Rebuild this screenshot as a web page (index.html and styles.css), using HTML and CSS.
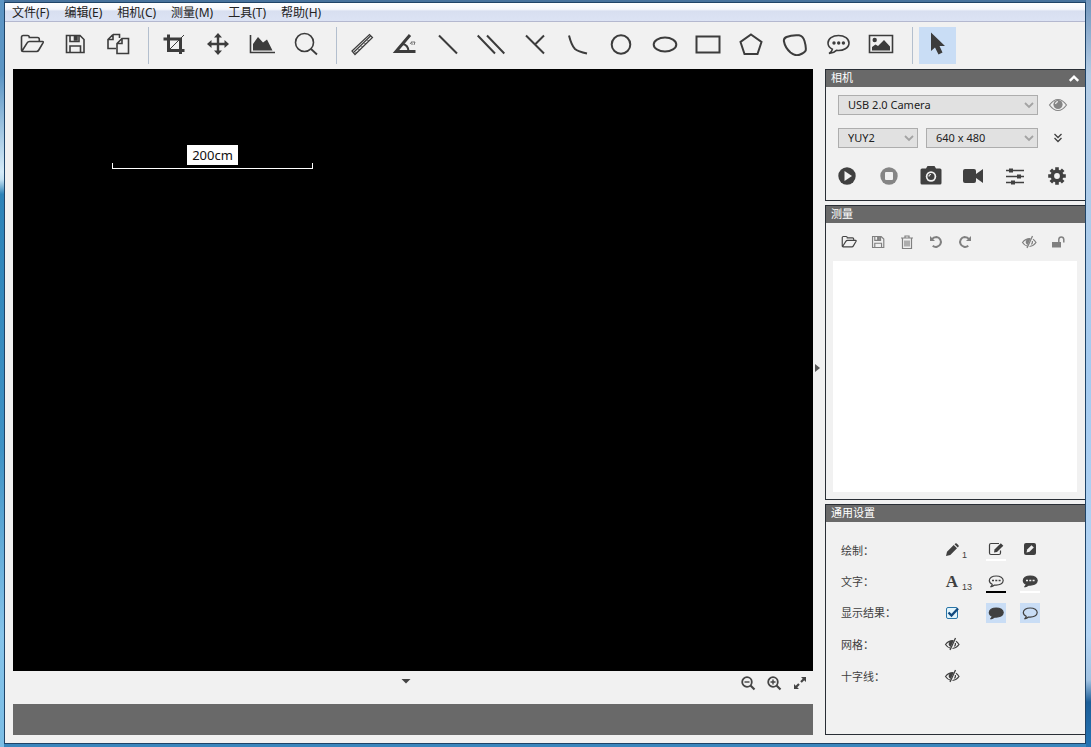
FILE: index.html
```html
<!DOCTYPE html>
<html lang="zh-CN">
<head>
<meta charset="utf-8">
<title>相机测量</title>
<link rel="stylesheet" href="styles.css">
</head>
<body>
<svg class="sprite" aria-hidden="true">
  <symbol id="folder" viewBox="0 0 28 24"><path d="M3.500 18V5.200Q3.500 3.500 5.200 3.500H9.500Q11.300 3.500 11.300 5.500H19.500Q21.300 5.500 21.300 7.300V9.300M4 19L9.300 10.700Q10 9.500 11.500 9.500H24.500Q25.700 9.500 25 10.800L20.800 18Q20 19.500 18.500 19.500H5Q3.500 19.500 3.500 18"/></symbol>
  <symbol id="save" viewBox="0 0 28 24"><path d="M5.500 3.500H19L23 7.500V20.500H5.500ZM9 20V14H19.500V20M9 4V9.500H18V4"/><path d="M13.500 4H16V8H13.500Z" fill="currentColor"/></symbol>
  <symbol id="copy" viewBox="0 0 28 24"><path d="M9 2.500H15.500V6M9 2.500L4 7.500V16.500H12M9 2.500V7.500H4M18 6.500H24.500V21.500H13V11.500ZM18 6.500V11.500H13"/></symbol>
  <symbol id="undo" viewBox="0 0 16 16"><path d="M3.500 5.500Q5.500 3 8.500 3A5 5 0 1 1 4.700 11.800" stroke-width="2"/><path d="M2 2V7H7Z" fill="currentColor" stroke="none"/></symbol>
  <symbol id="eye-slash" viewBox="0 0 16 16"><path d="M6.500 12.200Q3.500 11.500 1.500 8.500Q4.500 4.500 9.500 4.700M12 5.300Q13.700 6.500 15 8.500Q12.500 12 8.500 12.500"/><path d="M11.500 2L6 14" stroke-width="1.300"/><path d="M9.500 5A3.300 3.300 0 0 0 6.700 11Z" fill="currentColor" stroke="none"/><path d="M10.500 10.500Q11.800 9 11.400 7"/></symbol>
  <symbol id="bubble" viewBox="0 0 16 16"><path d="M8.200 3C4.200 3 1.300 5 1.300 7.600C1.300 9.200 2.500 10.500 4.200 11.300Q4 12.800 2.500 13.800Q5 13.500 6.500 12C12 12.500 15.200 10.400 15.200 7.600C15.200 5 12.200 3 8.200 3Z"/></symbol>
  <symbol id="chevron" viewBox="0 0 10 10"><path d="M1 3L5 7L9 3" stroke-width="1.800"/></symbol>
</svg>

<div class="window">
  <nav class="menubar" aria-label="菜单">
    <button>文件(F)</button><button>编辑(E)</button><button>相机(C)</button><button>测量(M)</button><button>工具(T)</button><button>帮助(H)</button>
  </nav>

  <div class="toolbar" role="toolbar" aria-label="工具栏">
    <div class="group files">
      <button class="tool" aria-label="打开"><svg class="icon"><use href="#folder"/></svg></button>
      <button class="tool" aria-label="保存"><svg class="icon"><use href="#save"/></svg></button>
      <button class="tool" aria-label="复制"><svg class="icon"><use href="#copy"/></svg></button>
    </div>
    <div class="group">
      <button class="tool" aria-label="裁剪"><svg class="icon" viewBox="0 0 28 24"><path d="M3.500 7H20.500V22M8.500 2.500V18.500H24.500" stroke-width="3"/><path d="M8 19L24 3" stroke-width="1"/></svg></button>
      <button class="tool" aria-label="移动"><svg class="icon" viewBox="0 0 28 24"><path d="M14 3V21M5 12H23" stroke-width="2.400"/><path d="M14 1L18 5.500H10ZM14 23L18 18.500H10ZM3 12L7.500 8V16ZM25 12L20.500 8V16Z" fill="currentColor" stroke="none"/></svg></button>
      <button class="tool" aria-label="直方图"><svg class="icon" viewBox="0 0 28 24"><path d="M2.500 3V20.500H27"/><path d="M5 18.500V12L10 5L15 10.500L19 7.500L24.500 18.500Z" fill="currentColor" stroke="none"/></svg></button>
      <button class="tool" aria-label="缩放"><svg class="icon" viewBox="0 0 28 24"><circle cx="12.500" cy="10.500" r="9"/><path d="M19 17L25 22.500" stroke-width="1.800"/></svg></button>
    </div>
    <div class="group shapes">
      <button class="tool" aria-label="标尺"><svg class="icon" viewBox="0 0 28 24"><path d="M4 19L21.500 2.500L24.500 5.500L7 22.500ZM6 20L22.500 4" stroke-width="1.200"/><path d="M8.500 21L7.500 20M11.500 18L10.500 17M14.500 15L13.500 14M17.500 12L16.500 11M20.500 9L19.500 8" stroke-width="1"/></svg></button>
      <button class="tool" aria-label="角度"><svg class="icon" viewBox="0 0 28 24"><path d="M19 3L5 19.500H24.500" stroke-width="3"/><path d="M12 12Q17 13 17.500 19" stroke-width="2"/><path d="M19 12L21 9.500V13M22 10H24L23 13" stroke-width=".7"/></svg></button>
      <button class="tool" aria-label="直线"><svg class="icon bold" viewBox="0 0 28 24"><path d="M5 3.500L23 21.500"/></svg></button>
      <button class="tool" aria-label="平行线"><svg class="icon bold" viewBox="0 0 28 24"><path d="M.7 3.500L18 21.500M10 3.500L27.300 21.500"/></svg></button>
      <button class="tool" aria-label="垂线"><svg class="icon bold" viewBox="0 0 28 24"><path d="M5 3.500L23 21.500M14 12.500L23 3.500"/></svg></button>
      <button class="tool" aria-label="弧线"><svg class="icon bold" viewBox="0 0 28 24"><path d="M5 3.500Q7.500 13.500 11 17Q14 19.500 23 21.500"/></svg></button>
      <button class="tool" aria-label="圆"><svg class="icon bold" viewBox="0 0 28 24"><circle cx="14" cy="12.500" r="9.300"/></svg></button>
      <button class="tool" aria-label="椭圆"><svg class="icon bold" viewBox="0 0 28 24"><ellipse cx="14" cy="12.500" rx="11.300" ry="7"/></svg></button>
      <button class="tool" aria-label="矩形"><svg class="icon bold" viewBox="0 0 28 24"><path d="M2.500 4.500H25.500V20.500H2.500Z"/></svg></button>
      <button class="tool" aria-label="多边形"><svg class="icon bold" viewBox="0 0 28 24"><path d="M14 2.500L24.500 10L20.500 22H7.500L3.500 10Z"/></svg></button>
      <button class="tool" aria-label="曲线"><svg class="icon bold" viewBox="0 0 28 24"><path d="M3 9.500Q2.300 6.500 5.500 5Q11 2.700 18 3.300Q22 4 23.500 9Q25.300 15 24.700 18.500Q23.500 21 18.500 22.700Q14 24.300 9.500 20.500Q4 15.500 3 9.500Z"/></svg></button>
      <button class="tool" aria-label="注释"><svg class="icon" viewBox="0 0 28 24"><path d="M14.500 3.500C8.500 3.500 4 6.700 4 11C4 13.800 5.700 15.900 8.400 17.200Q8 20 5 21.500Q10 21 12.500 18.400C19.500 19 25 15.800 25 11C25 6.700 20.500 3.500 14.500 3.500Z"/><g fill="currentColor" stroke="none"><circle cx="10" cy="11" r="1.700"/><circle cx="14.700" cy="11" r="1.700"/><circle cx="19.400" cy="11" r="1.700"/></g></svg></button>
      <button class="tool" aria-label="图片"><svg class="icon" viewBox="0 0 28 24"><path d="M2.500 3.500H25.500V20.500H2.500Z"/><g fill="currentColor" stroke="none"><circle cx="7.700" cy="8" r="2.200"/><path d="M5 18.500V15L8.500 12.500L11 14L17 8L23 14.500V18.500Z"/></g></svg></button>
    </div>
    <div class="group">
      <button class="tool active" aria-label="选择" aria-pressed="true"><svg class="icon" viewBox="0 0 28 24"><path d="M7 .5V19L11 15.500L14.500 22.500L18.500 20.500L15.500 14H21Z" fill="currentColor" stroke="none"/></svg></button>
    </div>
  </div>

  <div class="workspace">
    <main class="stage">
      <div class="canvas">
        <div class="scale"><span class="scale-label">200cm</span><span class="scale-line"></span></div>
      </div>
      <div class="stage-bar">
        <button class="mini fold" aria-label="折叠"><svg viewBox="0 0 10 6"><path d="M.5 1H9.500L5 5.500Z" fill="currentColor" stroke="none"/></svg></button>
        <div class="zoomers">
          <button class="mini" aria-label="缩小"><svg viewBox="0 0 16 16"><circle cx="7" cy="7" r="4.800" stroke-width="1.800"/><path d="M10.500 10.500L14.500 14.500" stroke-width="2.200"/><path d="M4.500 7H9.500" stroke-width="1.400"/></svg></button>
          <button class="mini" aria-label="放大"><svg viewBox="0 0 16 16"><circle cx="7" cy="7" r="4.800" stroke-width="1.800"/><path d="M10.500 10.500L14.500 14.500" stroke-width="2.200"/><path d="M4.500 7H9.500M7 4.500V9.500" stroke-width="1.400"/></svg></button>
          <button class="mini" aria-label="适应窗口"><svg viewBox="0 0 16 16"><path d="M3.500 12.500L7 9M9 7L12.500 3.500" stroke-width="2.200"/><path d="M9 2H14V7ZM2 9V14H7Z" fill="currentColor" stroke="none"/></svg></button>
        </div>
      </div>
      <div class="status"></div>
    </main>

    <div class="splitter"><button aria-label="收起面板"><svg viewBox="0 0 6 10"><path d="M1 1L6 5L1 9Z" fill="currentColor"/></svg></button></div>

    <aside class="side">
      <section class="panel">
        <header><h2>相机</h2><button aria-label="收起"><svg viewBox="0 0 10 10"><path d="M1.500 6.500L5 3L8.500 6.500" stroke-width="2"/></svg></button></header>
        <div class="camera">
          <div class="row">
            <label class="select"><select aria-label="相机"><option>USB 2.0 Camera</option></select><svg><use href="#chevron"/></svg></label>
            <button class="side-icon dim" aria-label="预览"><svg class="eye" viewBox="0 0 20 16"><path d="M1.500 8Q5.500 2.500 10 2.500T18.500 8Q14.500 13.500 10 13.500T1.500 8Z"/><circle cx="10" cy="7.500" r="4.600" fill="currentColor" stroke="none"/><path d="M7.500 7Q8 4.700 10 4.700" stroke="#f1f1f1"/></svg></button>
          </div>
          <div class="row">
            <label class="select format"><select aria-label="格式"><option>YUY2</option></select><svg><use href="#chevron"/></svg></label>
            <label class="select"><select aria-label="分辨率"><option>640 x 480</option></select><svg><use href="#chevron"/></svg></label>
            <button class="side-icon" aria-label="更多"><svg viewBox="0 0 16 16"><path d="M4.500 4L8 7.500L11.500 4M4.500 8L8 11.500L11.500 8" stroke-width="1.300"/></svg></button>
          </div>
          <div class="actions">
            <button aria-label="播放"><svg viewBox="0 0 24 24"><circle cx="12" cy="12" r="8.700" fill="currentColor" stroke="none"/><path d="M9.500 7L17 12L9.500 17Z" fill="#f1f1f1" stroke="none"/></svg></button>
            <button class="dim" aria-label="停止"><svg viewBox="0 0 24 24"><circle cx="12" cy="12" r="8.700" fill="currentColor" stroke="none"/><rect x="8" y="8" width="8" height="8" rx="1" fill="#f1f1f1" stroke="none"/></svg></button>
            <button aria-label="拍照"><svg viewBox="0 0 24 24"><path d="M3 4.500H7L8.500 2H15.500L17 4.500H21Q22.500 4.500 22.500 6V19Q22.500 20.500 21 20.500H3Q1.500 20.500 1.500 19V6Q1.500 4.500 3 4.500Z" fill="currentColor" stroke="none"/><circle cx="12" cy="12.500" r="5.200" fill="#f1f1f1" stroke="none"/><circle cx="12" cy="12.500" r="3.500" fill="currentColor" stroke="none"/><path d="M10 12.500Q10 10.500 12 10.500" stroke="#f1f1f1"/></svg></button>
            <button aria-label="录像"><svg viewBox="0 0 24 24"><path d="M4 5H13Q15 5 15 7V10L22 5V19L15 14V17Q15 19 13 19H4Q2 19 2 17V7Q2 5 4 5Z" fill="currentColor" stroke="none"/></svg></button>
            <button aria-label="调节"><svg viewBox="0 0 24 24"><path d="M3 6.500H21M3 12.500H21M3 18.500H21" stroke-width="1.500"/><path d="M6 4.500H10V8.500H6ZM14 10.500H18V14.500H14ZM8 16.500H12V20.500H8Z" fill="currentColor" stroke="none"/></svg></button>
            <button aria-label="设置"><svg viewBox="0 0 24 24"><circle cx="12" cy="12" r="4.700" stroke-width="3.600"/><path d="M12 3.200V6M12 18V20.800M3.200 12H6M18 12H20.800M5.800 5.800L7.800 7.800M16.200 16.200L18.200 18.200M18.200 5.800L16.200 7.800M7.800 16.200L5.800 18.200" stroke-width="3.600"/></svg></button>
          </div>
        </div>
      </section>

      <section class="panel measure">
        <header><h2>测量</h2></header>
        <div class="measure-tools">
          <button class="dark" aria-label="打开"><svg class="thick"><use href="#folder"/></svg></button>
          <button aria-label="保存"><svg class="thick"><use href="#save"/></svg></button>
          <button aria-label="删除"><svg viewBox="0 0 16 16"><path d="M3.500 4.500V14.500H12.500V4.500M2 4H14M6 4V2H10V4M6 6.500V12.500M8 6.500V12.500M10 6.500V12.500"/></svg></button>
          <button aria-label="撤销"><svg><use href="#undo"/></svg></button>
          <button aria-label="重做"><svg viewBox="0 0 16 16"><path d="M12.500 5.500Q10.500 3 7.500 3A5 5 0 1 0 11.300 11.800" stroke-width="2"/><path d="M14 2V7H9Z" fill="currentColor" stroke="none"/></svg></button>
          <button class="end" aria-label="隐藏"><svg><use href="#eye-slash"/></svg></button>
          <button aria-label="解锁"><svg viewBox="0 0 16 16"><path d="M2 8H11V13.500H2Z" fill="currentColor" stroke="none"/><path d="M8.800 8V5.500Q9 3 11.300 3T13.800 5.500V8.500" stroke-width="1.500"/></svg></button>
        </div>
        <div class="list"></div>
      </section>

      <section class="panel">
        <header><h2>通用设置</h2></header>
        <div class="settings">
          <div class="setting"><span class="name">绘制<span class="colon">：</span></span>
            <span class="with-sub"><button aria-label="线宽"><svg viewBox="0 0 16 16"><path d="M2 14L3 9.700L9.700 3L13 6.300L6.300 13Z M10.500 2.200L11.300 1.500Q12 1 12.700 1.500L14.500 3.300Q15 4 14.500 4.700L13.800 5.500Z" fill="currentColor" stroke="none"/></svg></button><sub>1</sub></span>
            <button class="line white" aria-label="线条颜色"><svg viewBox="0 0 16 16"><path d="M11 2.500H3Q1.500 2.500 1.500 4V12Q1.500 13.500 3 13.500H11Q12.500 13.500 12.500 12V9.500"/><path d="M6 11.500L6.500 8.500L12.800 2.200L15.300 4.700L9 11Z" fill="currentColor" stroke="none"/></svg></button>
            <button class="line" aria-label="填充颜色"><svg viewBox="0 0 16 16"><rect x="2" y="2" width="12" height="12" rx="2" fill="currentColor" stroke="none"/><path d="M4.500 11.500L5.200 8.500L9.500 4.200L11.800 6.500L7.500 10.800Z" fill="#f1f1f1" stroke="none"/></svg></button>
          </div>
          <div class="setting"><span class="name">文字<span class="colon">：</span></span>
            <span class="with-sub"><button class="letter" aria-label="字号">A</button><sub>13</sub></span>
            <button class="line black" aria-label="文字颜色"><svg viewBox="0 0 16 16"><use href="#bubble"/><path d="M4 7.500H6M7.300 7.500H9.300M10.600 7.500H12.600" stroke-width="1.600"/></svg></button>
            <button class="line white" aria-label="文字背景"><svg viewBox="0 0 16 16"><use class="solid" href="#bubble"/><path d="M4 7.500H6M7.300 7.500H9.300M10.600 7.500H12.600" stroke="#f1f1f1" stroke-width="1.600"/></svg></button>
          </div>
          <div class="setting"><span class="name">显示结果<span class="colon">：</span></span>
            <label class="check"><input type="checkbox" checked aria-label="显示结果"><svg viewBox="0 0 16 16"><path d="M4.500 7.500L7.500 10.500L14 3.500" stroke-width="2.400"/></svg></label>
            <button class="on" aria-label="填充气泡"><svg class="solid"><use href="#bubble"/></svg></button>
            <button class="on" aria-label="空心气泡"><svg><use href="#bubble"/></svg></button>
          </div>
          <div class="setting"><span class="name">网格<span class="colon">：</span></span><button aria-label="网格"><svg><use href="#eye-slash"/></svg></button></div>
          <div class="setting"><span class="name">十字线<span class="colon">：</span></span><button aria-label="十字线"><svg><use href="#eye-slash"/></svg></button></div>
        </div>
      </section>
    </aside>
  </div>
</div>
</body>
</html>
```

FILE: styles.css
```css
* { box-sizing: border-box; }

body {
  display: flex;
  min-height: 100vh;
  margin: 0;
  padding: 2px 5px 3px 4px;
  font: 12px/18px "Noto Sans", "Noto Sans CJK SC", sans-serif;
  color: #222;
  background:
    linear-gradient(#5c95c4, #5c95c4 10%, #d5ebf8 23%, #c5e2f3 24%, #2d83b8 26%, #3f92c5 60%, #86c4ea 85%, #7bbde5) left / 4px 100% no-repeat,
    linear-gradient(#7397bd, #b4cde6 10%, #a4cbf0 50%, #b5d6f5 85%, #a3c4e3 91%, #1c5e98 94%, #2473b3) right / 5px 100% no-repeat,
    linear-gradient(#47729c, #47729c 50%, #3a86bd 50%);
}

button {
  display: grid;
  place-items: center;
  padding: 0;
  border: 0;
  background: none;
  color: inherit;
  font: inherit;
}

svg {
  fill: none;
  stroke: currentColor;
  stroke-width: 1.2;
}

.sprite { position: absolute; width: 0; height: 0; }

.window {
  flex: 1;
  min-width: 0;
  display: flex;
  flex-direction: column;
  border: 1px solid #1f4468;
  background: #f1f1f1;
}

.menubar {
  display: flex;
  gap: 15px;
  height: 19px;
  padding: 1px 0 0 7px;
  border-bottom: 1px solid #b4b8cf;
  background: linear-gradient(#fff, #f5f7fc 35%, #d8dff0 45%, #dce3f4);
}

.menubar button { line-height: 17px; }

.toolbar {
  display: flex;
  height: 47px;
  padding: 5px 8px;
  color: #3c3c3c;
}

.group { display: flex; gap: 7px; }

.group + .group {
  margin-left: 12px;
  padding-left: 6px;
  border-left: 1px solid #b3bfce;
}

.files { gap: 6px; }

.shapes {
  width: 564px;
  gap: 0;
  justify-content: space-between;
}

.tool {
  width: 37px;
  height: 37px;
  padding-bottom: 3px;
}

.tool.active { background: #c9ddf5; }

.icon { width: 28px; height: 24px; stroke-width: 1.6; }
.bold { stroke-width: 2; }

.workspace {
  flex: 1;
  display: flex;
  padding: 0 0 8px 8px;
}

.stage {
  flex: 1;
  min-width: 0;
  display: flex;
  flex-direction: column;
}

.canvas {
  position: relative;
  flex: 1;
  background: #000;
}

.scale {
  position: absolute;
  left: 99px;
  top: 76px;
  width: 201px;
  display: grid;
  justify-items: center;
}

.scale-label {
  padding: 0 5px;
  background: #fff;
  color: #111;
  font-size: 13px;
  line-height: 20px;
}

.scale-line {
  width: 100%;
  height: 6px;
  margin-top: -2px;
  border: 1px solid #fff;
  border-top: 0;
}

.stage-bar {
  display: grid;
  grid-template-columns: 1fr auto 1fr;
  height: 33px;
  color: #444;
}

.mini { width: 20px; height: 24px; }
.mini svg { width: 16px; height: 16px; }
.fold { width: 24px; height: 20px; margin-right: 14px; grid-column: 2; }
.fold svg { width: 10px; height: 6px; }

.zoomers {
  display: flex;
  justify-content: flex-end;
  gap: 6px;
  padding-right: 3px;
}

.status { height: 31px; background: #696969; }

.splitter {
  display: flex;
  align-items: center;
  width: 12px;
  padding: 0 0 68px 1px;
  color: #555;
}

.splitter svg { display: block; width: 6px; height: 10px; stroke: none; }

.side {
  display: flex;
  flex-direction: column;
  gap: 4px;
  width: 260px;
}

.panel {
  border: 1px solid #292e35;
  border-right: 0;
  color: #404040;
}

.panel header {
  display: flex;
  justify-content: space-between;
  height: 17px;
  padding: 0 5px;
  background: #696969;
  color: #fff;
}

.panel h2 {
  margin: 0;
  font-size: 11px;
  font-weight: 400;
  line-height: 16px;
}

.panel header svg { width: 12px; height: 12px; }

.camera { padding: 8px 7px 12px 0; }

.row {
  display: flex;
  gap: 8px;
  height: 20px;
  margin-bottom: 13px;
  padding: 0 8px 0 12px;
}

.select {
  flex: 1;
  display: grid;
  align-items: center;
}

.select.format { flex: 0 0 80px; }

.select > * { grid-area: 1 / 1; }

.select select {
  width: 100%;
  height: 20px;
  padding: 0 20px 0 9px;
  border: 1px solid #adadad;
  border-radius: 0;
  background: #e1e1e1;
  color: #222;
  font: 11px/18px "Noto Sans", sans-serif;
  appearance: none;
}

.select svg {
  justify-self: end;
  width: 10px;
  height: 10px;
  margin-right: 4px;
  color: #a3a3a3;
  pointer-events: none;
}

.side-icon { width: 24px; height: 20px; }
.side-icon svg { width: 16px; height: 16px; }
.side-icon .eye { width: 20px; }
.dim { color: #858585; }

.actions {
  display: grid;
  grid-template-columns: repeat(6, 1fr);
  margin-top: 16px;
}

.actions svg { width: 24px; height: 24px; }

.measure {
  flex: 1;
  display: flex;
  flex-direction: column;
}

.measure-tools {
  display: flex;
  align-items: center;
  gap: 9px;
  height: 38px;
  padding: 0 17px 0 13px;
  color: #808080;
}

.measure-tools button { width: 20px; height: 20px; }
.measure-tools svg { width: 16px; height: 16px; }
.measure-tools .thick { width: 18px; stroke-width: 1.8; }
.measure-tools .dark { color: #444; }
.measure-tools .end { margin-left: auto; }

.list {
  flex: 1;
  margin: 0 8px 7px 7px;
  background: #fff;
}

.settings {
  padding: 12px 0 42px 15px;
  font-size: 11px;
}

.setting {
  display: grid;
  grid-template-columns: 101px 44px 34px 20px;
  align-items: center;
  height: 32px;
}

.setting:nth-child(n+2) { height: 31px; }
.setting:nth-child(n+4) { height: 32px; }

.colon { font-family: "Noto Sans CJK TC", sans-serif; }
.colon:lang(zh) { font-family: "Noto Sans CJK TC", sans-serif; }

.name { line-height: 18px; }

.setting button { width: 20px; height: 20px; }
.setting svg { width: 16px; height: 16px; }
.setting .solid { fill: currentColor; }

.with-sub { display: flex; align-items: center; }
.with-sub sub {
  padding-top: 10px;
  font: 9px/12px "Liberation Sans", sans-serif;
}

.setting .letter { font: 700 17px/20px "Liberation Serif", serif; }

.setting .line {
  height: 22px;
  border-bottom: 2px solid transparent;
}

.setting .white { border-bottom-color: #fff; }
.setting .black { border-bottom-color: #000; }
.setting .on { background: #c9ddf5; }

.check {
  display: grid;
  place-items: center;
  width: 20px;
  height: 20px;
  color: #124a80;
}

.check > * { grid-area: 1 / 1; }

.check input {
  width: 12px;
  height: 12px;
  margin: 0;
  border: 1px solid #2a76a8;
  border-radius: 2px;
  background: #e3f4fb;
  appearance: none;
}

.check svg { pointer-events: none; }
```
